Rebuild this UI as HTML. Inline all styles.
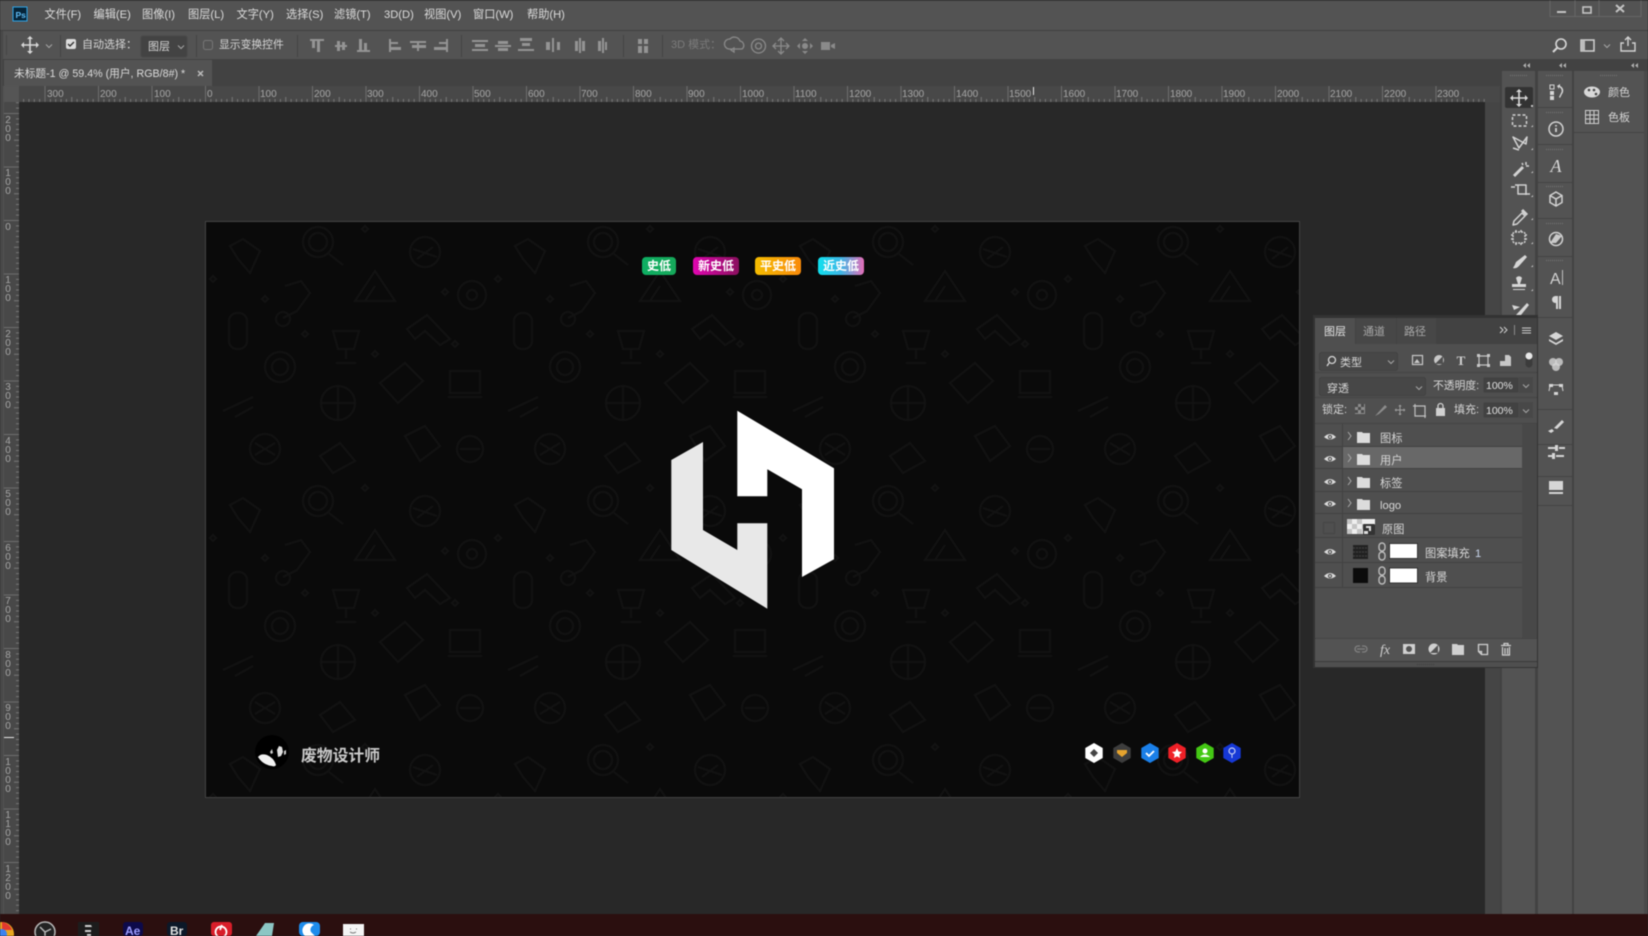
<!DOCTYPE html>
<html lang="zh"><head><meta charset="utf-8"><title>Photoshop</title>
<style>
html,body{margin:0;padding:0;background:#282828;width:1648px;height:936px;overflow:hidden}
svg{display:block;filter:blur(.45px)}
text{font-family:"Liberation Sans","Noto Sans CJK SC",sans-serif;font-size:11px;fill:#d6d6d6}
.m text{font-size:11.2px;fill:#dcdcdc}
.r text{font-size:10px;fill:#a6a6a6}
.v text{font-size:10px;fill:#a6a6a6;text-anchor:middle}
.l text{font-size:11.2px;fill:#d8d8d8}
.o{fill:none;stroke:#d2d2d2;stroke-width:1.5}
.g{fill:#949494}
.d{fill:none;stroke:#8a8a8a;stroke-width:1.3}
.f{fill:#d6d6d6}
.b text{font-size:12px;fill:#fff;font-weight:bold;text-anchor:middle}
.p *{fill:none;stroke:#121212;stroke-width:2}
</style></head><body>
<svg width="1648" height="936" viewBox="0 0 1648 936" xmlns="http://www.w3.org/2000/svg">
<defs>
<pattern id="rh" x="205" y="86" width="53.5" height="16" patternUnits="userSpaceOnUse">
<path d="M.5 0V16" stroke="#6d6d6d"/><path d="M5.85 13V16M11.2 13V16M16.55 13V16M21.9 13V16M27.25 11V16M32.6 13V16M37.95 13V16M43.3 13V16M48.65 13V16" stroke="#777"/>
</pattern>
<pattern id="rv" x="4" y="220" width="15" height="53.5" patternUnits="userSpaceOnUse">
<path d="M0 .5H15" stroke="#6d6d6d"/><path d="M12 5.85H15M12 11.2H15M12 16.55H15M12 21.9H15M10 27.25H15M12 32.6H15M12 37.95H15M12 43.3H15M12 48.65H15" stroke="#777"/>
</pattern>
<pattern id="pt" x="205" y="221" width="285" height="259" patternUnits="userSpaceOnUse"><g class="p">
<circle cx="113" cy="21" r="15"/><circle cx="113" cy="21" r="9"/><path d="M124 33L138 44"/>
<circle cx="220" cy="31" r="15"/><path d="M208 28L232 36M212 38L228 26"/>
<circle cx="267" cy="74" r="14"/><circle cx="267" cy="74" r="5"/>
<path d="M25 25L38 18L55 30L45 52L33 38Z"/>
<path d="M80 65L96 60L105 72L92 90L78 97"/><circle cx="78" cy="98" r="7"/>
<path d="M150 80L170 50L190 80ZM160 80L170 65"/>
<path d="M202 108L222 94L245 118L235 124L220 110L210 118Z"/>
<path d="M128 110H154L149 128H133ZM141 128V138M131 142H151"/>
<circle cx="75" cy="146" r="15"/><circle cx="75" cy="146" r="8"/>
<rect x="24" y="92" width="18" height="36" rx="8"/>
<path d="M175 162L200 142L218 160L193 182Z"/>
<rect x="245" y="150" width="30" height="22"/><path d="M243 176H277"/>
<circle cx="133" cy="182" r="17"/><path d="M116 182H150M133 165V199"/>
<path d="M18 190L48 176M30 196L48 186"/>
<path d="M8 55l3 3-3 3-3-3zM60 75l3 3-3 3-3-3zM160 5l3 3-3 3-3-3zM240 68l3 3-3 3-3-3zM100 110l3 3-3 3-3-3zM170 130l3 3-3 3-3-3zM250 120l3 3-3 3-3-3z"/>
<circle cx="60" cy="228" r="15"/><path d="M50 222L70 234M50 234L70 222"/>
<path d="M200 215L220 205L235 225L215 240Z"/>
<circle cx="265" cy="228" r="13"/><path d="M255 228H275"/>
<path d="M115 235L135 222L150 240L128 252Z"/>
</g></pattern>
<g id="mv"><path d="M-8 0H8M0-8V8" stroke="#d8d8d8" stroke-width="1.6" fill="none"/><path d="M-9 0l3-3v6zM9 0l-3-3v6zM0-9l-3 3h6zM0 9l-3-3h6z" fill="#d8d8d8"/></g>
<g id="eye"><path d="M-6 0Q0-6 6 0Q0 5-6 0Z" fill="#dcdcdc"/><circle r="2.1" fill="#4f4f4f"/><circle r="1" fill="#dcdcdc"/></g>
<g id="fd"><path d="M0 0h5l1 1h7v10H0z" fill="#dcdcdc"/></g>
<g id="cr"><path d="M-1 -4L2 0L-1 4" fill="none" stroke="#a8a8a8"/></g>
<g id="ln"><path d="M-3-6a2.6 2.6 0 0 1 6 0v2a2.6 2.6 0 0 1-6 0zM-3 3a2.6 2.6 0 0 1 6 0v2a2.6 2.6 0 0 1-6 0z" fill="none" stroke="#bcbcbc" stroke-width="1.4"/></g>
<g id="ch"><path d="M-3-1.5L0 1.5L3-1.5" fill="none" stroke="#a6a6a6"/></g>
</defs>

<!-- base -->
<rect width="1648" height="936" fill="#535353"/>
<rect width="1648" height="1" fill="#3c3c3c"/>
<rect y="30" width="1648" height="1" fill="#404040"/>
<rect y="59" width="1500" height="27" fill="#424242"/>
<rect x="0" y="31" width="3" height="883" fill="#484848"/>

<!-- menu -->
<rect x="13" y="7" width="14" height="14" fill="#062438" stroke="#2fa4e6"/>
<text x="15.5" y="18" style="font-size:8.5px;fill:#5fbcf5;font-weight:bold">Ps</text>
<g class="m">
<text x="44.500" y="18">文件(F)</text><text x="93.500" y="18">编辑(E)</text><text x="142" y="18">图像(I)</text><text x="188" y="18">图层(L)</text><text x="236.500" y="18">文字(Y)</text><text x="286" y="18">选择(S)</text><text x="334" y="18">滤镜(T)</text><text x="384" y="18">3D(D)</text><text x="424" y="18">视图(V)</text><text x="473" y="18">窗口(W)</text><text x="527" y="18">帮助(H)</text>
</g>
<!-- window controls -->
<path d="M1550 .5V16.5H1641V.5M1575 0V17M1599 0V17" fill="none" stroke="#666"/>
<rect x="1557" y="11" width="9" height="2" fill="#c4c4c4"/>
<rect x="1583" y="7" width="8" height="6" fill="none" stroke="#c4c4c4" stroke-width="1.6"/>
<path d="M1616 5l8 7M1624 5l-8 7" stroke="#c4c4c4" stroke-width="2"/>

<!-- options bar -->
<g fill="#464646"><rect x="6" y="35" width="1" height="20"/></g>
<use href="#mv" x="30" y="45"/><use href="#ch" x="49" y="46"/>
<rect x="60" y="35" width="1" height="22" fill="#444"/>
<rect x="66" y="39" width="10" height="10" rx="2" fill="#dcdcdc"/><path d="M68 44l2 2 4-4" fill="none" stroke="#333" stroke-width="1.4"/>
<text x="82" y="48">自动选择：</text>
<rect x="141" y="36" width="46" height="21" rx="2" fill="#434343" stroke="#484848"/>
<text x="148" y="50">图层</text><use href="#ch" x="181" y="47"/>
<rect x="196" y="35" width="1" height="22" fill="#444"/>
<rect x="203.500" y="40.500" width="9" height="9" rx="2" fill="none" stroke="#777"/>
<text x="219" y="48" style="font-size:10.800px">显示变换控件</text>
<rect x="297" y="35" width="1" height="22" fill="#444"/>
<g class="g">
<path d="M310 39H324V41H320V52H317V41H315V48H312V41H310z"/>
<path d="M335 45H347V47H335zM337 41H340V51H337zM342 42H345V50H342z"/>
<path d="M357 52V50H359V39H362V50H364V43H367V50H370V52z"/>
<path d="M389 39H391V52H389zM391 42H398V44H391zM391 47H401V50H391z"/>
<path d="M410 42H426V44H419V46H426V49H419V52H417V49H412V46H417V44H410z" transform="translate(0 -1)"/>
<path d="M447 39H449V52H447zM440 42H447V44H440zM435 47H447V50H435z" transform="translate(-1 0)"/>
<path d="M472 40H488V42H472zM475 44H485V47H475zM472 49H488V51H472z"/>
<path d="M495 45H511V47H495zM498 41H508V44H498zM498 48H508V51H498z"/>
<path d="M518 50H534V52H518zM522 44H530V47H522zM520 39H532V42H520z" transform="translate(0 -1)"/>
<path d="M552 38H554V52H552zM557 42H560V50H557zM546 42H550V50H546z"/>
<path d="M579 38H581V53H579zM575 41H578V51H575zM582 41H585V51H582z"/>
<path d="M602 38H604V53H602zM598 41H601V51H598zM605 42H607V50H605z"/>
<path d="M638 39H642V44H638zM644 39H648V44H644zM638 46H642V53H638zM644 46H648V53H644z"/>
</g>
<rect x="461" y="35" width="1" height="22" fill="#444"/>
<rect x="623" y="35" width="1" height="22" fill="#444"/>
<rect x="662" y="35" width="1" height="22" fill="#444"/>
<text x="671" y="48" style="fill:#7b7b7b;font-size:11px">3D 模式：</text>
<g class="d">
<path d="M729 49a5 5 0 0 1 1-10a6 6 0 0 1 10 2a4.500 4.500 0 0 1 2 8z"/><path d="M731 50l3-2v4z"/>
<circle cx="758.500" cy="46" r="7"/><circle cx="758.500" cy="46" r="3"/>
<path d="M781 38v16M773 46h16M778 41l3-3 3 3M778 51l3 3 3-3M776 43l-3 3 3 3M786 43l3 3-3 3"/>
</g>
<g fill="#8a8a8a"><circle cx="805" cy="46" r="3"/><path d="M805 38l3 3h-6zM805 54l3-3h-6zM797 46l3-3v6zM813 46l-3-3v6z"/><rect x="821" y="42" width="9" height="8"/><path d="M831 45l4-2v6l-4-2z"/></g>
<!-- right top icons -->
<circle cx="1561" cy="44" r="5" fill="none" stroke="#d8d8d8" stroke-width="1.6"/><path d="M1557 48l-4 4" stroke="#d8d8d8" stroke-width="2"/>
<rect x="1581" y="40" width="13" height="11" fill="none" stroke="#d2d2d2" stroke-width="1.500"/><rect x="1581" y="40" width="4" height="11" fill="#bcbcbc"/>
<use href="#ch" x="1607" y="46"/>
<path d="M1624 43h-3v8h14v-8h-3M1628 46v-9M1625 40l3-3 3 3" fill="none" stroke="#d2d2d2" stroke-width="1.400"/>

<!-- tab -->
<rect x="4" y="60" width="208" height="26" fill="#535353"/>
<text x="14" y="77" style="font-size:10.700px;fill:#dcdcdc">未标题-1 @ 59.4% (用户, RGB/8#) *</text>
<path d="M198 71l5 5M203 71l-5 5" stroke="#bcbcbc" stroke-width="1.500"/>

<!-- rulers -->
<rect x="4" y="86" width="1496" height="16" fill="#484848"/>
<rect x="19" y="86" width="1466" height="16" fill="url(#rh)"/>
<rect x="4" y="86" width="15" height="16" fill="#555"/>
<rect x="4" y="102" width="15" height="812" fill="#484848"/>
<rect x="4" y="102" width="15" height="812" fill="url(#rv)"/>
<rect x="1485" y="102" width="15" height="812" fill="#454545"/>
<g class="r">
<text x="47" y="97">300</text><text x="100" y="97">200</text><text x="154" y="97">100</text><text x="207" y="97">0</text><text x="260" y="97">100</text><text x="314" y="97">200</text><text x="367" y="97">300</text><text x="421" y="97">400</text><text x="474" y="97">500</text><text x="528" y="97">600</text><text x="581" y="97">700</text><text x="635" y="97">800</text><text x="688" y="97">900</text><text x="742" y="97">1000</text><text x="795" y="97">1100</text><text x="849" y="97">1200</text><text x="902" y="97">1300</text><text x="956" y="97">1400</text><text x="1009" y="97">1500</text><text x="1063" y="97">1600</text><text x="1116" y="97">1700</text><text x="1170" y="97">1800</text><text x="1223" y="97">1900</text><text x="1277" y="97">2000</text><text x="1330" y="97">2100</text><text x="1384" y="97">2200</text><text x="1437" y="97">2300</text>
</g>
<rect x="1033" y="87" width="1" height="8" fill="#e8e8e8"/>
<rect x="4" y="737" width="10" height="1" fill="#e8e8e8"/>
<g class="v">
<text x="8" y="123">2</text><text x="8" y="132">0</text><text x="8" y="141">0</text>
<text x="8" y="176">1</text><text x="8" y="185">0</text><text x="8" y="194">0</text>
<text x="8" y="230">0</text>
<text x="8" y="283">1</text><text x="8" y="292">0</text><text x="8" y="301">0</text>
<text x="8" y="337">2</text><text x="8" y="346">0</text><text x="8" y="355">0</text>
<text x="8" y="390">3</text><text x="8" y="399">0</text><text x="8" y="408">0</text>
<text x="8" y="444">4</text><text x="8" y="453">0</text><text x="8" y="462">0</text>
<text x="8" y="497">5</text><text x="8" y="506">0</text><text x="8" y="515">0</text>
<text x="8" y="551">6</text><text x="8" y="560">0</text><text x="8" y="569">0</text>
<text x="8" y="604">7</text><text x="8" y="613">0</text><text x="8" y="622">0</text>
<text x="8" y="658">8</text><text x="8" y="667">0</text><text x="8" y="676">0</text>
<text x="8" y="711">9</text><text x="8" y="720">0</text><text x="8" y="729">0</text>
<text x="8" y="765">1</text><text x="8" y="774">0</text><text x="8" y="783">0</text><text x="8" y="792">0</text>
<text x="8" y="818">1</text><text x="8" y="827">1</text><text x="8" y="836">0</text><text x="8" y="845">0</text>
<text x="8" y="872">1</text><text x="8" y="881">2</text><text x="8" y="890">0</text><text x="8" y="899">0</text>
</g>

<!-- pasteboard -->
<rect x="19" y="102" width="1466" height="812" fill="#282828"/>

<!-- document -->
<rect x="205.500" y="221.500" width="1094" height="576" fill="#0a0a0a" stroke="#424242"/>
<rect x="206" y="222" width="1093" height="575" fill="url(#pt)"/>

<!-- badges -->
<defs>
<linearGradient id="g1" x1="0" x2="1" y1="0" y2="0"><stop offset="0" stop-color="#0eaf63"/><stop offset="1" stop-color="#16a85a"/></linearGradient>
<linearGradient id="g2" x1="0" x2="1" y1="0" y2="0"><stop offset="0" stop-color="#e006b0"/><stop offset="1" stop-color="#8a0f5e"/></linearGradient>
<linearGradient id="g3" x1="0" x2="1" y1="0" y2="0"><stop offset="0" stop-color="#f5bc00"/><stop offset="1" stop-color="#f98a0a"/></linearGradient>
<linearGradient id="g4" x1="0" x2="1" y1="0" y2="0"><stop offset="0" stop-color="#0fe0ee"/><stop offset=".5" stop-color="#3fb6e6"/><stop offset="1" stop-color="#e56db8"/></linearGradient>
</defs>
<g class="b">
<rect x="642" y="257" width="34" height="18" rx="4" fill="url(#g1)"/><text x="659" y="270">史低</text>
<rect x="693" y="257" width="46" height="18" rx="4" fill="url(#g2)"/><text x="716" y="270">新史低</text>
<rect x="755" y="257" width="46" height="18" rx="4" fill="url(#g3)"/><text x="778" y="270">平史低</text>
<rect x="818" y="257" width="46" height="18" rx="4" fill="url(#g4)"/><text x="841" y="270">近史低</text>
</g>

<!-- logo -->
<path d="M737.300 410.700L834 468.300V559.300L802 577V489.300L767.300 469.300V496.300H737.300Z" fill="#fff"/>
<path d="M703 442V530L737.300 550V523.300H767.300V608.700L671.300 550V460Z" fill="#e8e8e8"/>

<!-- avatar -->
<circle cx="272" cy="752" r="17" fill="#000"/>
<path d="M258 757q3-4 9-2q7 3 9 10q-1 2-4 1q-9-1-14-9z" fill="#f2f2f2"/>
<path d="M277 750l2-4 3 1 1 5-2 4-3 1z" fill="#e0e0e0"/><path d="M270 752l2-3 1 4-2 1zM284 751l2-1v4l-2 1z" fill="#d0d0d0"/>
<text x="301" y="761" style="font-size:15.800px;font-weight:bold;fill:#c9c9c9">废物设计师</text>

<!-- hex badges -->
<g transform="translate(1094 753)"><path d="M0-10L8.700-5V5L0 10L-8.700 5V-5Z" fill="#fff"/><path d="M0-4l4 4-4 4-4-4z" fill="#444"/></g>
<g transform="translate(1122 753)"><path d="M0-10L8.700-5V5L0 10L-8.700 5V-5Z" fill="#3d3d3d"/><path d="M-5-3H5L5 0L0 4L-5 0Z" fill="#e5a32e"/></g>
<g transform="translate(1150 753)"><path d="M0-10L8.700-5V5L0 10L-8.700 5V-5Z" fill="#1a7fe8"/><path d="M-4 0L-1 3L4-2" fill="none" stroke="#fff" stroke-width="1.800"/></g>
<g transform="translate(1177 753)"><path d="M0-10L8.700-5V5L0 10L-8.700 5V-5Z" fill="#ef2027"/><path d="M0-5L1.500-1.500L5-1L2.400 1.400L3 5L0 3.200L-3 5L-2.400 1.400L-5-1L-1.500-1.500Z" fill="#fff"/></g>
<g transform="translate(1205 753)"><path d="M0-10L8.700-5V5L0 10L-8.700 5V-5Z" fill="#44c814"/><circle cy="-2" r="2.500" fill="#fff"/><path d="M-5 4Q0-1 5 4Z" fill="#fff"/></g>
<g transform="translate(1232 753)"><path d="M0-10L8.700-5V5L0 10L-8.700 5V-5Z" fill="#1638d6"/><circle cy="-2" r="3" fill="none" stroke="#c8d0f4" stroke-width="1.200"/><path d="M0 1V5" stroke="#c8d0f4"/></g>

<!-- right docks -->
<rect x="1500" y="59" width="148" height="855" fill="#424242"/>
<rect x="1502" y="71" width="33" height="843" fill="#535353"/>
<rect x="1538" y="71" width="34" height="843" fill="#535353"/>
<rect x="1574" y="71" width="70" height="843" fill="#535353"/>
<rect x="1644" y="71" width="4" height="843" fill="#4a4a4a"/>
<g fill="#b0b0b0"><path d="M1530 63l-3 2.500 3 2.500zM1526 63l-3 2.500 3 2.500zM1566 63l-3 2.500 3 2.500zM1562 63l-3 2.500 3 2.500zM1638 63l-3 2.500 3 2.500zM1634 63l-3 2.500 3 2.500z"/></g>
<g stroke="#757575" stroke-dasharray="1 1"><path d="M1510 75.500H1528M1546 75.500H1564M1600 75.500H1618M1546 112.500H1564M1546 149.500H1564M1546 186.500H1564M1546 223.500H1564M1546 260.500H1564"/></g>
<g fill="#444"><rect x="1538" y="107" width="34" height="1"/><rect x="1538" y="144" width="34" height="1"/><rect x="1538" y="182" width="34" height="1"/><rect x="1538" y="218" width="34" height="1"/><rect x="1538" y="256" width="34" height="1"/><rect x="1538" y="317" width="34" height="1"/><rect x="1538" y="409" width="34" height="1"/><rect x="1538" y="444" width="34" height="1"/><rect x="1538" y="476" width="34" height="1"/><rect x="1538" y="505" width="34" height="1"/><rect x="1574" y="132" width="70" height="1"/></g>

<!-- toolbar -->
<rect x="1505" y="87" width="28" height="21" rx="2" fill="#333"/>
<use href="#mv" x="1519" y="98"/>
<g class="o" stroke-linejoin="round">
<rect x="1512.500" y="115" width="14" height="11" stroke-dasharray="3 2"/>
<path d="M1513 137L1526 144L1527 137L1519 148L1513 137ZM1513 148L1519 150"/>
<path d="M1514 176L1523 167" stroke-width="3"/><path d="M1526 162v3M1522 163l1 2M1529 166h-3"/>
<path d="M1515 185H1526V195M1518 185V194H1530M1511 187H1515" stroke-width="1.500"/>
<path d="M1514 221L1522 213L1525 216L1517 224L1513 225Z"/><path d="M1522 210L1527 215" stroke-width="3"/>
<rect x="1513" y="232" width="12" height="11" rx="2" stroke-dasharray="2 1"/><path d="M1511 235h2M1511 239h2M1525 235h2M1525 239h2M1516 230v2M1521 230v2M1516 243v2M1521 243v2"/>
</g>
<g class="f">
<path d="M1525 255L1527 257L1519 266Q1516 269 1513 268Q1515 265 1516 262Z"/>
<path d="M1516 278a3.500 3.500 0 0 1 6 0L1520 284H1526V287H1512V284H1518ZM1513 289H1525V290H1513Z"/>
<path d="M1527 303L1529 305L1521 315H1516ZM1512 305L1520 307L1514 310Z"/>
</g>
<g fill="#c4c4c4"><path d="M1531 105h2v2h-2zM1531 127l2-2v2zM1531 150l2-2v2zM1531 173l2-2v2zM1531 197l2-2v2zM1531 220l2-2v2zM1531 244l2-2v2zM1531 267l2-2v2zM1531 291l2-2v2z"/></g>

<!-- col2 icons -->
<g class="o">
<circle cx="1556" cy="129" r="7"/><path d="M1556 128v4M1556 125v1.500" stroke-width="1.800"/>
<path d="M1556 194l6 3.500v7l-6 3.500-6-3.500v-7zM1550 197.500l6 3.500 6-3.500M1556 201v7" transform="translate(0 -2)"/>
<circle cx="1556" cy="239" r="6.500"/>
</g>
<g class="f">
<rect x="1550" y="85" width="4" height="4" fill="none" stroke="#d6d6d6"/><rect x="1550" y="91" width="4" height="4"/><rect x="1550" y="96" width="4" height="4"/>
<path d="M1557 86l3-2v2a5 5 0 0 1 2 8l-2 4-1-1 2-4a4 4 0 0 0-2-6v2z"/>
<path d="M1556 243L1550 243L1556 234L1562 236Z" opacity=".9"/>
<path d="M1559 296H1561V309H1559zM1555 296H1558V309H1556V303A3.500 3.500 0 0 1 1555 296Z"/>
</g>
<text x="1556" y="172" text-anchor="middle" style="font-family:'Liberation Serif',serif;font-style:italic;font-size:18px;fill:#d8d8d8">A</text>
<text x="1550" y="284" style="font-size:16px;fill:#d2d2d2">A</text><rect x="1562" y="270" width="1" height="15" fill="#c0c0c0"/>
<g class="f">
<path d="M1549 336l7-4 7 4-7 4zM1549 339l7 4 7-4v2l-7 4-7-4z"/>
<circle cx="1553" cy="362" r="4" opacity=".8"/><circle cx="1559" cy="362" r="4" opacity=".8"/><circle cx="1556" cy="367" r="4" opacity=".8"/>
<path d="M1552 385h8M1550 386l-1 5M1562 386l1 5" stroke="#d6d6d6" fill="none"/><path d="M1549 384h4v3h-4zM1559 384h4v3h-4zM1554 392h4v3h-4z"/>
<path d="M1562 420l2 2-7 7-3-1zM1548 431l4-2 2 2-3 2z"/>
<path d="M1548 447h8v2h-8zM1559 447h6v2h-6zM1548 455h4v2h-4zM1556 455h8v2h-8zM1555 445h3v6h-3zM1552 453h3v6h-3z"/>
<rect x="1549" y="481" width="14" height="9"/><path d="M1549 492h14v2h-14z"/>
</g>

<!-- col3 -->
<ellipse cx="1592" cy="92" rx="8" ry="5.500" fill="#d8d8d8"/><circle cx="1589" cy="90" r="1.300" fill="#444"/><circle cx="1594" cy="90" r="1.300" fill="#444"/><circle cx="1596" cy="94" r="1.300" fill="#444"/>
<path d="M1585.500 110.500H1598.500V123.500H1585.500ZM1585.500 115H1598.500M1585.500 119H1598.500M1590 110.500V123.500M1594 110.500V123.500" fill="none" stroke="#cfcfcf"/>
<text x="1608" y="96">颜色</text>
<text x="1608" y="121">色板</text>

<!-- layers panel -->
<rect x="1313" y="315" width="225" height="353" fill="#333"/>
<rect x="1315" y="318" width="222" height="349" fill="#4f4f4f"/>
<rect x="1315" y="318" width="222" height="26" fill="#424242"/>
<rect x="1315" y="318" width="40" height="26" fill="#4f4f4f"/>
<rect x="1356" y="318" width="40" height="26" fill="#474747"/>
<rect x="1397" y="318" width="39" height="26" fill="#474747"/>
<text x="1324" y="335" style="fill:#e4e4e4">图层</text>
<text x="1363" y="335" style="fill:#a8a8a8">通道</text>
<text x="1404" y="335" style="fill:#a8a8a8">路径</text>
<path d="M1500 327l3 3-3 3M1504 327l3 3-3 3" fill="none" stroke="#cfcfcf"/><rect x="1514" y="325" width="1" height="10" fill="#8a8a8a"/>
<path d="M1522 328H1531M1522 330.500H1531M1522 333H1531" stroke="#cfcfcf"/>

<rect x="1319.500" y="352.500" width="78" height="18" rx="2" fill="#474747" stroke="#424242"/>
<circle cx="1332" cy="360" r="3.500" fill="none" stroke="#d6d6d6" stroke-width="1.300"/><path d="M1329 363l-2 3" stroke="#d6d6d6" stroke-width="1.300"/>
<text x="1340" y="366">类型</text><use href="#ch" x="1391" y="362"/>
<rect x="1412.500" y="355.500" width="10" height="9" fill="none" stroke="#c8c8c8" stroke-width="1.200"/><path d="M1414 363l3-4 3 4z" fill="#c8c8c8"/>
<circle cx="1439" cy="360" r="5" fill="#c8c8c8"/><path d="M1443 356L1435 364L1443 364Z" fill="#4f4f4f"/>
<text x="1461" y="365" text-anchor="middle" style="font-family:'Liberation Serif',serif;font-weight:bold;font-size:13px;fill:#d0d0d0">T</text>
<rect x="1479" y="356" width="9" height="9" fill="none" stroke="#c8c8c8" stroke-width="1.200"/><path d="M1477 354h3v3h-3zM1487 354h3v3h-3zM1477 364h3v3h-3zM1487 364h3v3h-3z" fill="#c8c8c8"/>
<path d="M1505 355h4l2 2v9h-11v-5h5z" fill="#c8c8c8"/>
<rect x="1525.500" y="352.500" width="7" height="15" rx="3.500" fill="#3c3c3c"/><circle cx="1529" cy="356" r="3.500" fill="#e8e8e8"/>
<rect x="1315" y="372" width="222" height="1" fill="#444"/>

<rect x="1319.500" y="377.500" width="106" height="18" rx="2" fill="#474747" stroke="#424242"/>
<text x="1327" y="392">穿透</text><use href="#ch" x="1419" y="388"/>
<text x="1433" y="389" style="font-size:10.800px">不透明度:</text>
<rect x="1483.500" y="377.500" width="35" height="15" fill="#424242"/><rect x="1519" y="377" width="14" height="16" fill="#484848"/>
<text x="1486" y="389" style="fill:#e0e0e0;font-size:10.500px">100%</text><use href="#ch" x="1526" y="386"/>
<rect x="1315" y="397" width="222" height="1" fill="#444"/>

<text x="1322" y="413">锁定:</text>
<rect x="1355" y="404" width="10" height="10" fill="#8c8c8c"/><path d="M1355 404h3v3h-3zM1361 404h3v3h-3zM1358 407h3v3h-3zM1355 410h3v3h-3zM1361 410h3v3h-3z" fill="#4a4a4a"/>
<path d="M1385 405L1387 407L1379 414L1375 416Z" fill="#8c8c8c"/>
<use href="#mv" transform="translate(1400 410) scale(.6)" opacity=".6"/>
<path d="M1415 404V416H1426M1413 406H1425V418" fill="none" stroke="#c0c0c0" stroke-width="1.200"/>
<rect x="1436" y="408" width="9" height="8" fill="#d0d0d0"/><path d="M1438 408v-2a2.500 2.500 0 0 1 5 0v2" fill="none" stroke="#d0d0d0" stroke-width="1.300"/>
<text x="1454" y="413">填充:</text>
<rect x="1483.500" y="402.500" width="35" height="15" fill="#424242"/><rect x="1519" y="402" width="14" height="16" fill="#484848"/>
<text x="1486" y="414" style="fill:#e0e0e0;font-size:10.500px">100%</text><use href="#ch" x="1526" y="411"/>
<rect x="1315" y="423" width="222" height="1" fill="#444"/>

<!-- layer rows -->
<rect x="1522" y="424" width="15" height="214" fill="#484848"/>
<rect x="1343" y="447" width="179" height="21" fill="#686868"/>
<g fill="#424242">
<rect x="1315" y="446" width="207" height="1"/><rect x="1315" y="468" width="207" height="1"/><rect x="1315" y="491" width="207" height="1"/><rect x="1315" y="513" width="207" height="1"/><rect x="1315" y="537" width="207" height="1"/><rect x="1315" y="562" width="207" height="1"/><rect x="1315" y="587" width="207" height="1"/>
<rect x="1342" y="424" width="1" height="163"/>
</g>
<use href="#eye" x="1330" y="437"/><use href="#eye" x="1330" y="459"/><use href="#eye" x="1330" y="482"/><use href="#eye" x="1330" y="504"/><use href="#eye" x="1330" y="552"/><use href="#eye" x="1330" y="576"/>
<rect x="1323.500" y="522.500" width="11" height="11" fill="none" stroke="#444"/>
<use href="#cr" x="1349" y="436"/><use href="#cr" x="1349" y="458"/><use href="#cr" x="1349" y="481"/><use href="#cr" x="1349" y="503"/>
<use href="#fd" x="1357" y="432"/><use href="#fd" x="1357" y="454"/><use href="#fd" x="1357" y="477"/><use href="#fd" x="1357" y="499"/>
<g class="l">
<text x="1380" y="442">图标</text><text x="1380" y="464">用户</text><text x="1380" y="487">标签</text><text x="1380" y="509">logo</text>
<text x="1382" y="533">原图</text><text x="1425" y="557">图案填充</text><text x="1475" y="557" style="fill:#c8d4ea">1</text><text x="1425" y="581">背景</text>
</g>
<rect x="1347" y="519" width="28" height="15" fill="#eee"/><path d="M1347 519h5v5h-5zM1357 519h5v5h-5zM1352 524h5v5h-5zM1362 524h5v5h-5zM1347 529h5v5h-5zM1357 529h5v5h-5z" fill="#c4c4c4"/>
<rect x="1363" y="524" width="12" height="11" rx="1" fill="#333"/><path d="M1366 526h5v5h-2v-3h-3z" fill="#ddd"/><rect x="1364" y="531" width="4" height="3" fill="#ddd"/>
<rect x="1353" y="545" width="15" height="14" fill="#222"/><path d="M1353 548h15M1353 552h15M1353 556h15" stroke="#444" stroke-dasharray="2 1"/>
<rect x="1353" y="568" width="15" height="15" fill="#0b0b0b"/>
<use href="#ln" x="1382" y="552"/><use href="#ln" x="1382" y="576"/>
<rect x="1389.500" y="543.500" width="28" height="15" fill="#fff" stroke="#333"/>
<rect x="1389.500" y="568" width="28" height="15" fill="#fff" stroke="#333"/>

<!-- panel bottom -->
<rect x="1315" y="638" width="222" height="23" fill="#535353"/>
<rect x="1315" y="638" width="222" height="1" fill="#444"/>
<rect x="1315" y="661" width="222" height="1" fill="#3a3a3a"/>
<path d="M1355 649a3 3 0 0 1 3-3h2M1367 649a3 3 0 0 1-3 3h-2M1357 649h8M1355 649a3 3 0 0 0 3 3h2M1367 649a3 3 0 0 0-3-3h-2" fill="none" stroke="#808080" stroke-width="1.300"/>
<text x="1380" y="654" style="font-family:'Liberation Serif',serif;font-style:italic;font-size:14px;fill:#cfcfcf">fx</text>
<rect x="1403" y="644" width="12" height="10" fill="#d0d0d0"/><circle cx="1409" cy="649" r="3" fill="#535353"/>
<circle cx="1434" cy="649" r="5.500" fill="#d0d0d0"/><path d="M1438 645L1430 653L1438 653Z" fill="#535353"/>
<path d="M1452 644h5l1 1h6v10h-12z" fill="#d0d0d0"/>
<path d="M1478.500 644.500h9v10h-6l-3-3zM1478.500 651.500h3v3" fill="none" stroke="#d0d0d0" stroke-width="1.300"/>
<path d="M1501 645.500h10M1504 645v-1.500h4v1.500M1502.500 647v8h7v-8M1505 648v6M1507.500 648v6" fill="none" stroke="#d0d0d0" stroke-width="1.200"/>
<path d="M1417 664.500H1435" stroke="#3d3d3d" stroke-dasharray="1 1"/>

<!-- taskbar -->
<rect y="914" width="1648" height="22" fill="#2b0f0f"/>
<circle cx="2" cy="934" r="12" fill="#e9a71f"/><path d="M2 922a12 12 0 0 1 10 8H2z" fill="#e2392f"/><circle cx="2" cy="934" r="5" fill="#3b82f0"/>
<circle cx="45" cy="932" r="10" fill="#222" stroke="#b8b8b8" stroke-width="1.500"/><path d="M45 932l-5-5M45 932l6-3M45 932v6" stroke="#b8b8b8" stroke-width="1.500"/>
<rect x="78" y="922" width="21" height="14" fill="#1c1c1c"/><path d="M85 925h6l1 2h-7zM85 930h6v2h-6zM87 934h4v2h-4z" fill="#cfcfcf"/>
<rect x="123" y="922" width="20" height="14" rx="3" fill="#0d0a4a"/><text x="125" y="935" style="font-size:12px;font-weight:bold;fill:#9c9cff">Ae</text>
<rect x="167" y="922" width="20" height="14" rx="3" fill="#0c1828"/><text x="170" y="935" style="font-size:12px;font-weight:bold;fill:#e2e2e2">Br</text>
<rect x="211" y="922" width="21" height="14" rx="3" fill="#d81e2a"/><circle cx="221" cy="932" r="5.500" fill="none" stroke="#fff" stroke-width="1.800"/><path d="M222 925l-2 5" stroke="#fff" stroke-width="1.800"/>
<path d="M256 936L265 923H274L272 936Z" fill="#8cc6c4"/>
<rect x="299" y="922" width="21" height="14" rx="4" fill="#1d8cec"/><path d="M305 936a7 7 0 0 1 9-11a5 5 0 0 0-3 7l4 4z" fill="#fff"/>
<rect x="343" y="924" width="21" height="12" fill="#f4f4f4"/><path d="M350 929h1M356 929h1M350 932q3 2 6 0" stroke="#777" fill="none"/>
</svg>
</body></html>
